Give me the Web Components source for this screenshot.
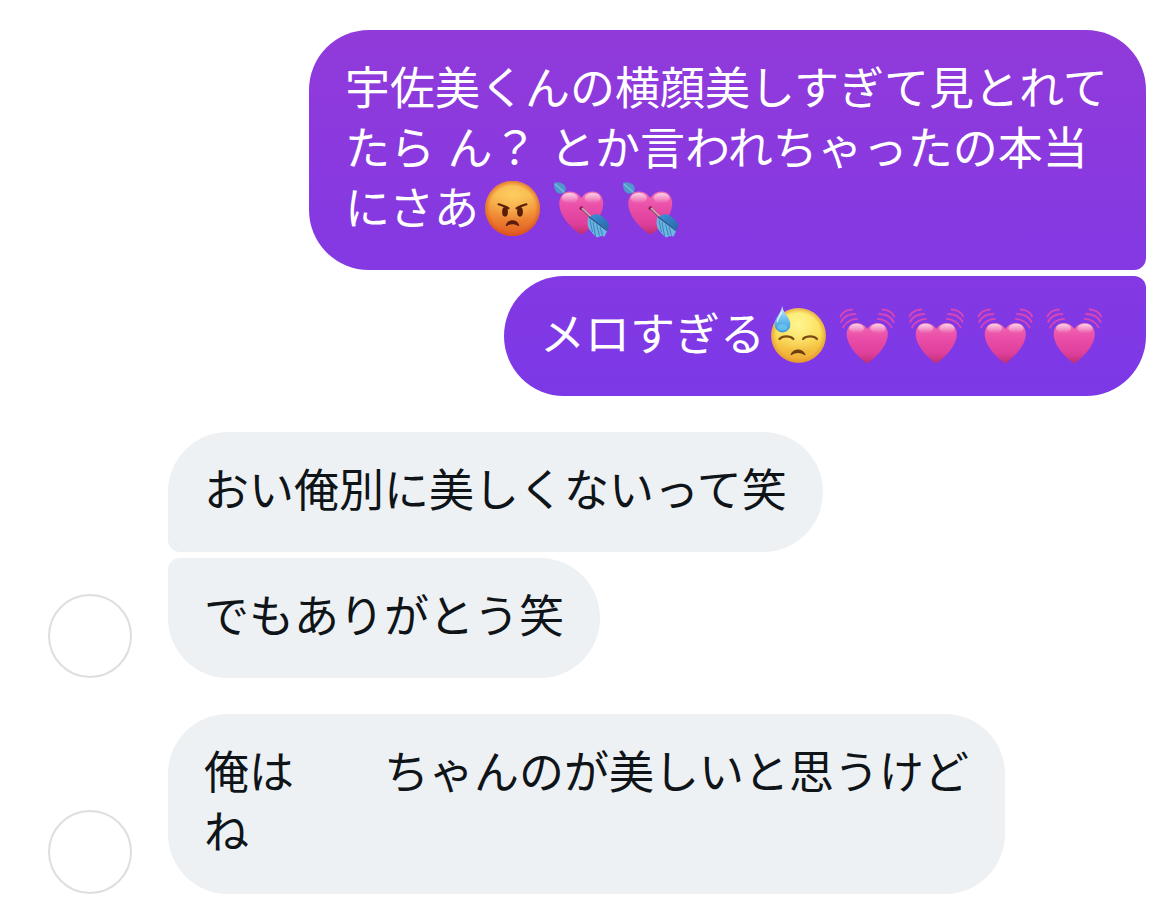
<!DOCTYPE html>
<html lang="ja">
<head>
<meta charset="utf-8">
<meta name="viewport" content="width=device-width, initial-scale=1">
<title>メッセージ</title>
<style>
	body {
		margin: 0;
		background: #fff;
		color: #0f1419;
		font: 45px/60px "Liberation Sans", "Noto Sans CJK JP", sans-serif;
	}
</style>
</head>
<body>

<chat-thread>
	<message-group side="out">
		<chat-bubble side="out">宇佐美くんの横顔美しすぎて見とれてたら ん？ とか言われちゃったの本当にさあ<emoji-icon name="angry"></emoji-icon><emoji-icon name="arrow-heart"></emoji-icon><emoji-icon name="arrow-heart"></emoji-icon></chat-bubble>
		<chat-bubble side="out">メロすぎる<emoji-icon name="sweat"></emoji-icon><emoji-icon name="beating-heart"></emoji-icon><emoji-icon name="beating-heart"></emoji-icon><emoji-icon name="beating-heart"></emoji-icon><emoji-icon name="beating-heart"></emoji-icon></chat-bubble>
	</message-group>
	<message-group side="in">
		<chat-bubble side="in">おい俺別に美しくないって笑</chat-bubble>
		<chat-bubble side="in">でもありがとう笑</chat-bubble>
	</message-group>
	<message-group side="in">
		<chat-bubble side="in">俺は&#x3000;&#x3000;ちゃんのが美しいと思うけどね</chat-bubble>
	</message-group>
</chat-thread>

<script>
function html(strings, ...values) {
	return String.raw(strings, ...values)
}


/**
 * The whole conversation, a column of message groups
 */
class ChatThread extends HTMLElement {
	constructor() {
		super();

		this.attachShadow({ mode: 'open' }).innerHTML = html`
			<style>
				:host {
					display: flex;
					flex-direction: column;
					gap: 36px;
					padding: 30px 24px 24px 48px;
				}
			</style>
			<slot></slot>
		`
	}
}

customElements.define('chat-thread', ChatThread);


/**
 * Consecutive bubbles of one sender. Incoming groups get an avatar.
 */
class MessageGroup extends HTMLElement {
	constructor() {
		super();

		this.attachShadow({ mode: 'open' }).innerHTML = html`
			<style>
				:host {
					display: flex;
					align-items: flex-end;
					gap: 36px;
				}

				.avatar {
					box-sizing: border-box;
					flex: none;
					width: 84px;
					height: 84px;
					border: 2px solid #dedede;
					border-radius: 50%;
				}

				.bubbles {
					flex: 1;
					min-width: 0;
					display: flex;
					flex-direction: column;
					align-items: flex-start;
					gap: 6px;
				}

				:host([side="out"]) .avatar {
					display: none;
				}

				:host([side="out"]) .bubbles {
					align-items: flex-end;
				}

				/* corners where two bubbles meet */
				::slotted(:not(:first-child)) {
					--joint-top: 12px;
				}

				::slotted(:not(:last-child)) {
					--joint-bottom: 12px;
				}
			</style>
			<div class="avatar"></div>
			<div class="bubbles"><slot></slot></div>
		`
	}
}

customElements.define('message-group', MessageGroup);


/**
 * 
 */
class ChatBubble extends HTMLElement {
	constructor() {
		super();

		this.attachShadow({ mode: 'open' }).innerHTML = html`
			<style>
				:host {
					display: block;
					box-sizing: border-box;
					max-width: min(100%, calc(17em + 72px));
					padding: 30px 36px;
					background: #edf1f4;
					border-radius: var(--joint-top, 60px) 60px 60px var(--joint-bottom, 60px);
				}

				/* one gradient runs through all the outgoing bubbles */
				:host([side="out"]) {
					color: #fff;
					background: linear-gradient(#933ad9 0, #7c38e7 400px) fixed;
					border-radius: 60px var(--joint-top, 60px) var(--joint-bottom, 60px) 60px;
				}
			</style>
			<slot></slot>
		`
	}
}

customElements.define('chat-bubble', ChatBubble);


const HEART_PINK = html`
	<linearGradient id="heart" x1="0" y1="0" x2="0" y2="1">
		<stop offset="0" stop-color="#f26cb4"/>
		<stop offset=".35" stop-color="#ea4fa9"/>
		<stop offset=".75" stop-color="#de3f9c"/>
		<stop offset="1" stop-color="#c02f70"/>
	</linearGradient>
	<linearGradient id="shine" x1="0" y1="0" x2="0" y2="1">
		<stop offset="0" stop-color="#fff" stop-opacity=".7"/>
		<stop offset="1" stop-color="#fff" stop-opacity="0"/>
	</linearGradient>
`

const EMOJI = {
	'angry': {
		label: '😡',
		art: html`
			<defs>
				<linearGradient id="skin" x1="0" y1="0" x2="0" y2="1">
					<stop offset="0" stop-color="#f5a93c"/>
					<stop offset=".25" stop-color="#f8b64a"/>
					<stop offset=".6" stop-color="#f08c36"/>
					<stop offset="1" stop-color="#e25a20"/>
				</linearGradient>
				<radialGradient id="rim">
					<stop offset=".82" stop-color="#d8481c" stop-opacity="0"/>
					<stop offset="1" stop-color="#d8481c" stop-opacity=".55"/>
				</radialGradient>
				<radialGradient id="glow" cx=".5" cy=".25" r=".5">
					<stop offset="0" stop-color="#ffd66b" stop-opacity=".7"/>
					<stop offset="1" stop-color="#ffd66b" stop-opacity="0"/>
				</radialGradient>
			</defs>
			<g transform="translate(1)">
				<circle cx="32.500" cy="28.500" r="27.500" fill="url(#skin)"/>
				<circle cx="32.500" cy="28.500" r="27.500" fill="url(#glow)"/>
				<circle cx="32.500" cy="28.500" r="27.500" fill="url(#rim)"/>
				<g fill="#5a1d0b">
					<ellipse cx="25" cy="31.800" rx="2.900" ry="4.900"/>
					<ellipse cx="40" cy="31.800" rx="2.900" ry="4.900"/>
					<path d="M25.800 45.300C27 41.800 29.500 40.200 32.500 40.200s5.500 1.600 6.700 5.100c.2 .7-.4 1-1 .6-3.500-2.200-7.900-2.200-11.400 0-.6 .4-1.200 .1-1-.6z"/>
				</g>
				<path d="M18.500 24.200C21 25 25.500 26.200 28.500 28.400M46.500 24.200C44 25 39.500 26.200 36.500 28.400" fill="none" stroke="#5a1d0b" stroke-width="2" stroke-linecap="round"/>
			</g>
		`
	},
	'arrow-heart': {
		label: '💘',
		art: html`
			<defs>${HEART_PINK}
				<linearGradient id="vane" x1="0" y1="0" x2="1" y2="1">
					<stop offset="0" stop-color="#3f92d8"/>
					<stop offset="1" stop-color="#2566a8"/>
				</linearGradient>
			</defs>
			<path d="M14 10L22 19" stroke="#8c7a96" stroke-width="2"/>
			<path d="M6 2.800C10 1.500 14.500 2.500 17 6c1.200 2 1 4.400-.2 6-2.400 2-6 2-8.200 0C6.500 10 5.800 6.500 6 2.800z" fill="#4f97cc"/>
			<path d="M7 4L16 12" stroke="#79b9de" stroke-width="1.500"/>
			<path d="M33.500 54.500C28 51.800 11.300 38.500 11.300 23.500c0-7.300 4.600-12 10.700-12 5 0 9 2.800 11.300 6.600 2.300-3.800 6.300-6.600 11.200-6.600 6.200 0 10.700 4.700 10.700 12C55.200 38.500 39 51.800 33.500 54.500z" fill="url(#heart)"/>
			<ellipse cx="21.800" cy="18" rx="8" ry="5.200" fill="url(#shine)"/>
			<ellipse cx="44.600" cy="18" rx="8" ry="5.200" fill="url(#shine)"/>
			<circle cx="33.500" cy="28.300" r="2" fill="#8c1c52"/>
			<path d="M33.800 28.500L44 38" stroke="#8c5570" stroke-width="2.800"/>
			<path d="M34 28L43 36.500" stroke="#e0b4c2" stroke-width="1.200"/>
			<path d="M41 37l6.500-3c5 .5 11 5 13.500 10.500l-.5 4-2 2z" fill="url(#vane)"/>
			<path d="M40.500 37c-1.500 3.500-1.200 8 .5 12l4.500 5.500 3.500 3 4-1.500 3.500 .5 2-4 .5-3z" fill="#6cb6e4"/>
			<path d="M42 40l2.500 12M45 42l2.500 14M48.500 44.500l3 11M52 47l2.500 8.500" stroke="#3d83b8" stroke-width="1"/>
			<path d="M41 37L59 50.500" stroke="#2a5686" stroke-width="1.300"/>
		`
	},
	'sweat': {
		label: '😓',
		art: html`
			<defs>
				<linearGradient id="skin" x1="0" y1="0" x2="0" y2="1">
					<stop offset="0" stop-color="#fbe55c"/>
					<stop offset=".5" stop-color="#fad750"/>
					<stop offset="1" stop-color="#efa835"/>
				</linearGradient>
				<radialGradient id="glow" cx=".5" cy=".3" r=".5">
					<stop offset="0" stop-color="#fffba0" stop-opacity=".8"/>
					<stop offset="1" stop-color="#fffba0" stop-opacity="0"/>
				</radialGradient>
				<radialGradient id="rim">
					<stop offset=".82" stop-color="#e0902a" stop-opacity="0"/>
					<stop offset="1" stop-color="#e0902a" stop-opacity=".65"/>
				</radialGradient>
				<linearGradient id="drop" x1="0" y1="0" x2="0" y2="1">
					<stop offset="0" stop-color="#d4effb"/>
					<stop offset=".45" stop-color="#74c3f0"/>
					<stop offset="1" stop-color="#2f96de"/>
				</linearGradient>
			</defs>
			<circle cx="33.500" cy="29.500" r="27.300" fill="url(#skin)"/>
			<circle cx="33.500" cy="29.500" r="27.300" fill="url(#glow)"/>
			<circle cx="33.500" cy="29.500" r="27.300" fill="url(#rim)"/>
			<path d="M14.500 33C17.500 29.600 25 29.600 28.400 33M38 33C41.400 29.600 49 29.600 52 33" fill="none" stroke="#7a4a12" stroke-width="2.200" stroke-linecap="round"/>
			<path d="M25.500 48.500C27 45 29.800 43.400 33 43.400s6 1.600 7.500 5.100c.2 .7-.4 1-1 .6-3.900-2.800-9.100-2.800-13 0-.6 .4-1.200 .1-1-.6z" fill="#6b3d10"/>
			<path d="M17.200 0C18 7 25.400 12 25.400 18.400a7.900 8 0 0 1-15.800 0C9.600 12 16.400 7 17.200 0z" fill="url(#drop)"/>
			<ellipse cx="17.400" cy="21.500" rx="5" ry="3.200" fill="#8fdbfa" opacity=".45"/>
			<path d="M16.500 6C15.500 9.500 13 12 12.300 15.500" fill="none" stroke="#fff" stroke-opacity=".7" stroke-width="1.500" stroke-linecap="round"/>
		`
	},
	'beating-heart': {
		label: '💓',
		art: html`
			<defs>${HEART_PINK}</defs>
			<path d="M33.300 57.500C28.500 54.500 12.700 41.500 12.700 28c0-6.800 4.300-11 10-11 4.700 0 8.400 2.500 10.600 6 2.200-3.500 5.900-6 10.500-6 5.700 0 10 4.200 10 11C53.800 41.500 38 54.500 33.300 57.500z" fill="url(#heart)"/>
			<ellipse cx="22.500" cy="22.500" rx="7.500" ry="4.800" fill="url(#shine)"/>
			<ellipse cx="44" cy="22.500" rx="7.500" ry="4.800" fill="url(#shine)"/>
			<g fill="none" stroke="#d945b4" stroke-width="1.800" stroke-linecap="round">
				<path d="M6.500 10.500Q9.500 4 18 3.500M7 16Q11 8 21.500 8M9 21.500Q13 13.500 23 12.800"/>
				<path d="M60.100 10.500Q57.100 4 48.600 3.500M59.600 16Q55.600 8 45.100 8M57.600 21.500Q53.600 13.500 43.600 12.800"/>
			</g>
		`
	}
}

/**
 * Inline emoji, one text line high
 */
class EmojiIcon extends HTMLElement {
	constructor() {
		super();

		this.attachShadow({ mode: 'open' })
	}

	connectedCallback() {
		const emoji = EMOJI[this.getAttribute('name')]

		this.shadowRoot.innerHTML = html`
			<style>
				:host {
					display: inline-block;
					width: 69px;
					height: 60px;
					vertical-align: top;
				}

				svg {
					display: block;
					width: 100%;
					height: 100%;
				}
			</style>
			<svg viewBox="0 0 69 60" role="img" aria-label="${emoji.label}">${emoji.art}</svg>
		`
	}
}

customElements.define('emoji-icon', EmojiIcon);
</script>
</body>
</html>
